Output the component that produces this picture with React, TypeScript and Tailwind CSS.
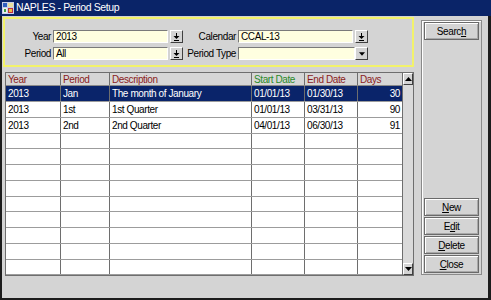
import React from "react";

type Row = {
  year: string;
  period: string;
  desc: string;
  start: string;
  end: string;
  days: string;
};

const rows: Row[] = [
  { year: "2013", period: "Jan", desc: "The month of January", start: "01/01/13", end: "01/30/13", days: "30" },
  { year: "2013", period: "1st", desc: "1st Quarter", start: "01/01/13", end: "03/31/13", days: "90" },
  { year: "2013", period: "2nd", desc: "2nd Quarter", start: "04/01/13", end: "06/30/13", days: "91" },
];

const raised =
  "bg-[#d4d4d4] border border-t-white border-l-white border-r-[#404040] border-b-[#404040]";
const sunken =
  "border border-t-[#7a7a7a] border-l-[#7a7a7a] border-r-white border-b-white";

const PickIcon = () => (
  <svg width="7" height="8" viewBox="0 0 7 8">
    <rect x="3" y="0" width="1" height="3" fill="#000" />
    <polygon points="0.5,3 6.5,3 3.5,6" fill="#000" />
    <rect x="1" y="7" width="5" height="1" fill="#000" />
  </svg>
);

const DownTri = ({ size = 7 }: { size?: number }) => (
  <svg width={size} height="4" viewBox="0 0 7 4">
    <polygon points="0,0 7,0 3.5,4" fill="#000" />
  </svg>
);

const UpTri = () => (
  <svg width="7" height="4" viewBox="0 0 7 4">
    <polygon points="0,4 7,4 3.5,0" fill="#000" />
  </svg>
);

const Field: React.FC<{ value: string; w: string }> = ({ value, w }) => (
  <div className={`${w} h-[13px] bg-[#ffffe0] ${sunken} pl-[2px] leading-[11px] text-black`}>
    {value}
  </div>
);

const PickButton = () => (
  <div className={`w-[13px] h-[13px] ${raised} flex items-center justify-center`}>
    <PickIcon />
  </div>
);

const Button: React.FC<{ children: React.ReactNode }> = ({ children }) => (
  <div className="h-[18px] w-full border border-[#6a6a6a] bg-[#d4d4d4] shadow-[inset_1px_1px_0_#ffffff,inset_-1px_-1px_0_#a8a8a8] flex items-center justify-center text-black">
    {children}
  </div>
);

const cellBase = "h-full border-r border-[#6e6e6e] px-[2px] flex items-center whitespace-nowrap overflow-hidden";

export default function App() {
  const allRows = Array.from({ length: 12 }, (_, i) => rows[i]);
  return (
    <div className="w-[491px] h-[300px] flex flex-col bg-[#d4d4d4] overflow-hidden font-['Liberation_Sans',Arial,sans-serif] text-[10px] tracking-[-0.4px]">
      {/* title bar */}
      <div className="h-[16px] bg-[#0a2468] flex items-center pl-[2px] gap-[2px] text-white text-[10.5px]">
        <svg width="12" height="12" viewBox="0 0 12 12">
          <rect x="0" y="0" width="12" height="12" fill="#c8d0e8" />
          <rect x="1" y="1" width="4" height="4" fill="#3060c0" />
          <rect x="6" y="1" width="5" height="4" fill="#e8e0a0" />
          <rect x="1" y="6" width="4" height="5" fill="#f0f0f0" />
          <rect x="6" y="6" width="5" height="5" fill="#c03040" />
          <rect x="7" y="7" width="3" height="3" fill="#f0c040" />
          <rect x="2" y="7" width="2" height="3" fill="#40a040" />
        </svg>
        <span>NAPLES - Period Setup</span>
      </div>

      {/* body */}
      <div className="flex-1 flex border-l-2 border-r-[3px] border-b-2 border-[#1c1c1c]">
        <div className="w-[412px] flex flex-col pl-[1px] pt-[1px]">
          {/* filter box */}
          <div className="w-[411px] h-[50px] border-2 border-[#f2f26a] pt-[11px] pb-[5px] flex flex-col gap-[4px]">
            <div className="flex items-center h-[13px]">
              <div className="w-[46px] text-right">Year</div>
              <div className="ml-[2px]"><Field value="2013" w="w-[115px]" /></div>
              <div className="ml-[2px]"><PickButton /></div>
              <div className="w-[53px] text-right">Calendar</div>
              <div className="ml-[2px]"><Field value="CCAL-13" w="w-[115px]" /></div>
              <div className="ml-[2px]"><PickButton /></div>
            </div>
            <div className="flex items-center h-[13px]">
              <div className="w-[46px] text-right">Period</div>
              <div className="ml-[2px]"><Field value="All" w="w-[115px]" /></div>
              <div className="ml-[2px]"><PickButton /></div>
              <div className="w-[53px] text-right">Period Type</div>
              <div className="ml-[2px] flex">
                <Field value="" w="w-[117px]" />
                <div className={`w-[13px] h-[13px] ${raised} flex items-center justify-center`}>
                  <DownTri size={6} />
                </div>
              </div>
            </div>
          </div>

          {/* grid */}
          <div className="ml-[2px] mt-[5px] w-[409px] h-[204px] flex border border-[#6e6e6e]">
            <div className="flex-1 flex flex-col bg-white">
              <div className="h-[13px] flex bg-[#d6d6d6] border-b border-[#8a8a8a]">
                <div className={`${cellBase} w-[55px] text-[#8b1c1c]`}>Year</div>
                <div className={`${cellBase} w-[49px] text-[#8b1c1c]`}>Period</div>
                <div className={`${cellBase} w-[142px] text-[#8b1c1c]`}>Description</div>
                <div className={`${cellBase} w-[53px] text-[#2a8a2a]`}>Start Date</div>
                <div className={`${cellBase} w-[53px] text-[#8b1c1c]`}>End Date</div>
                <div className={`${cellBase} w-[44px] border-r-0 text-[#8b1c1c]`}>Days</div>
              </div>
              {allRows.map((r, i) => (
                <div
                  key={i}
                  className={`flex border-b border-[#9c9c9c] ${i % 4 === 3 ? "h-[15px]" : "h-[16px]"} ${
                    i === 0 ? "bg-[#0a246a] text-white" : "text-black"
                  }`}
                >
                  <div className={`${cellBase} w-[55px]`}>{r?.year}</div>
                  <div className={`${cellBase} w-[49px]`}>{r?.period}</div>
                  <div className={`${cellBase} w-[142px]`}>{r?.desc}</div>
                  <div className={`${cellBase} w-[53px]`}>{r?.start}</div>
                  <div className={`${cellBase} w-[53px]`}>{r?.end}</div>
                  <div className={`${cellBase} w-[44px] border-r-0 justify-end`}>{r?.days}</div>
                </div>
              ))}
            </div>
            {/* scrollbar */}
            <div className="w-[12px] flex flex-col border-l border-[#6e6e6e] bg-[#dadada]">
              <div className={`h-[12px] ${raised} flex items-center justify-center`}>
                <UpTri />
              </div>
              <div className="flex-1" />
              <div className={`h-[12px] ${raised} flex items-center justify-center`}>
                <DownTri />
              </div>
            </div>
          </div>
        </div>

        {/* right panel */}
        <div className="ml-[7px] mt-[4px] w-[61px] h-[255px] border border-[#8a8a8a] shadow-[inset_1px_1px_0_#ffffff] flex flex-col px-[2px] pt-[1px] pb-[1px]">
          <Button>
            <span>
              Searc<u>h</u>
            </span>
          </Button>
          <div className="mt-auto flex flex-col gap-[1px]">
            <Button>
              <span>
                <u>N</u>ew
              </span>
            </Button>
            <Button>
              <span>
                E<u>d</u>it
              </span>
            </Button>
            <Button>
              <span>
                <u>D</u>elete
              </span>
            </Button>
            <Button>
              <span>
                <u>C</u>lose
              </span>
            </Button>
          </div>
        </div>
      </div>
    </div>
  );
}
